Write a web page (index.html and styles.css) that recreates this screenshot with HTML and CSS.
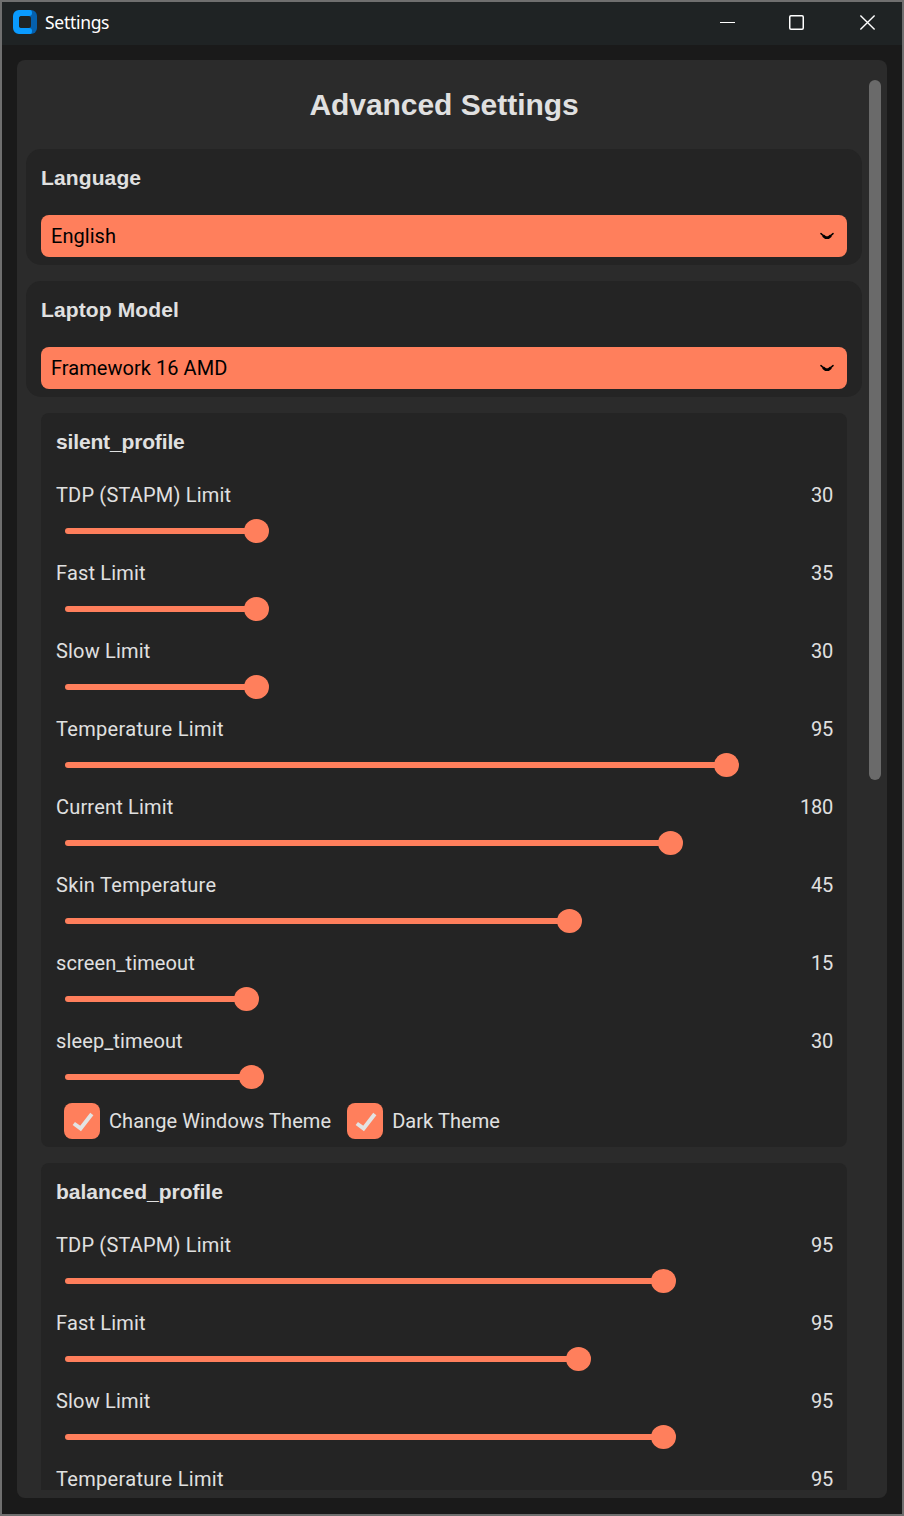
FILE: index.html
```html
<!DOCTYPE html>
<html lang="en">
<head>
<meta charset="utf-8">
<title>Settings</title>
<link rel="stylesheet" href="styles.css">
</head>
<body>
<div class="window">
  <header class="titlebar">
    <svg class="logo" width="24" height="24" viewBox="0 0 24 24"><path fill="#0560ad" d="M14 0h4a6 6 0 0 1 6 6v12a6 6 0 0 1-6 6h-4z"/><path fill="#0a9bff" d="M6 0h11a2 3 0 0 1 2 3a3 3 0 0 1-3 3H9a3 3 0 0 0-3 3v6a3 3 0 0 0 3 3h7a3 3 0 0 1 3 3a2 3 0 0 1-2 3H6a6 6 0 0 1-6-6V6a6 6 0 0 1 6-6z"/><rect x="6" y="6" width="12" height="12" rx="2.5" fill="#1f2324"/></svg>
    <span class="app-name">Settings</span>
    <div class="controls">
      <svg width="70" height="43" viewBox="0 0 70 43"><path d="M28 20.5h15" stroke="#fff" fill="none"/></svg>
      <svg width="70" height="43" viewBox="0 0 70 43"><rect x="27.75" y="13.75" width="13.5" height="13.5" rx="1.2" stroke="#fff" stroke-width="1.5" fill="none"/></svg>
      <svg width="70" height="43" viewBox="0 0 70 43"><path d="M28.4 13.4l14.2 14.2M42.6 13.4l-14.2 14.2" stroke="#fff" stroke-width="1.4" fill="none"/></svg>
    </div>
  </header>
  <main class="panel">
    <div class="content">
      <h1 class="title">Advanced Settings</h1>
      <section class="card">
        <h2 class="heading">Language</h2>
        <div class="select"><span>English</span><svg width="14" height="8" viewBox="0 0 14 8"><path d="M1 1.6l3 2.6M13 1.6l-3 2.6" stroke="#000" stroke-width="1.5" stroke-linecap="round"/><path d="M3 3.6L5.6 5.6h2.8L11 3.6" stroke="#000" stroke-width="2.6" fill="none"/></svg></div>
      </section>
      <section class="card">
        <h2 class="heading">Laptop Model</h2>
        <div class="select"><span>Framework 16 AMD</span><svg width="14" height="8" viewBox="0 0 14 8"><path d="M1 1.6l3 2.6M13 1.6l-3 2.6" stroke="#000" stroke-width="1.5" stroke-linecap="round"/><path d="M3 3.6L5.6 5.6h2.8L11 3.6" stroke="#000" stroke-width="2.6" fill="none"/></svg></div>
      </section>
      <section class="profile">
        <h2 class="heading tight">silent_profile</h2>
        <div class="row"><div class="label"><span>TDP (STAPM) Limit</span><span class="value">30</span></div><div class="slider" style="width:203.5px"></div></div>
        <div class="row"><div class="label"><span>Fast Limit</span><span class="value">35</span></div><div class="slider" style="width:203.5px"></div></div>
        <div class="row"><div class="label"><span>Slow Limit</span><span class="value">30</span></div><div class="slider" style="width:203.5px"></div></div>
        <div class="row"><div class="label"><span class="wide">Temperature Limit</span><span class="value">95</span></div><div class="slider" style="width:673.5px"></div></div>
        <div class="row"><div class="label"><span>Current Limit</span><span class="value">180</span></div><div class="slider" style="width:617.5px"></div></div>
        <div class="row"><div class="label"><span class="wide">Skin Temperature</span><span class="value">45</span></div><div class="slider" style="width:516.5px"></div></div>
        <div class="row"><div class="label"><span class="narrow">screen_timeout</span><span class="value">15</span></div><div class="slider" style="width:193.5px"></div></div>
        <div class="row"><div class="label"><span class="narrow">sleep_timeout</span><span class="value">30</span></div><div class="slider" style="width:198.5px"></div></div>
        <div class="checks">
          <div class="check"><svg width="36" height="36" viewBox="0 0 36 36"><rect width="36" height="36" rx="8" fill="#ff7f5c"/><path d="M9.8 20.5l6.8 4.9L27.8 11" stroke="#e3e3e3" stroke-width="4" fill="none"/></svg><span>Change Windows Theme</span></div>
          <div class="check"><svg width="36" height="36" viewBox="0 0 36 36"><rect width="36" height="36" rx="8" fill="#ff7f5c"/><path d="M9.8 20.5l6.8 4.9L27.8 11" stroke="#e3e3e3" stroke-width="4" fill="none"/></svg><span>Dark Theme</span></div>
        </div>
      </section>
      <section class="profile">
        <h2 class="heading">balanced_profile</h2>
        <div class="row"><div class="label"><span>TDP (STAPM) Limit</span><span class="value">95</span></div><div class="slider" style="width:610.5px"></div></div>
        <div class="row"><div class="label"><span>Fast Limit</span><span class="value">95</span></div><div class="slider" style="width:525.5px"></div></div>
        <div class="row"><div class="label"><span>Slow Limit</span><span class="value">95</span></div><div class="slider" style="width:610.5px"></div></div>
        <div class="row"><div class="label"><span class="wide">Temperature Limit</span><span class="value">95</span></div><div class="slider" style="width:673.5px"></div></div>
      </section>
    </div>
    <div class="scrollbar"></div>
  </main>
</div>
</body>
</html>
```
FILE: styles.css
```css
* { box-sizing: border-box; }
body { margin: 0; background: #1a1a1a; overflow: hidden; }
.window { height: 1516px; border: 2px solid #6f6f6f; background: #1a1a1a; color: #e0e0e0; font: 20px/24px Roboto, sans-serif; }
.titlebar { display: flex; align-items: center; height: 43px; padding-left: 11px; background: #1f2324; }
.logo { margin-top: -3px; }
.app-name { margin: -3px 0 0 8px; font: 17.5px/24px "Noto Sans", sans-serif; letter-spacing: -0.3px; color: #fff; }
.controls { display: flex; margin-left: auto; }
.panel { display: flex; justify-content: space-between; margin: 15px 15px 0; height: 1438px; padding: 0 6px 8px 9px; border-radius: 8px; background: #2b2b2b; }
.content { width: 836px; overflow: hidden; }
.title { margin: 0; height: 89px; text-align: center; font: bold 30px/89px "Liberation Sans", Arial, sans-serif; letter-spacing: -0.05px; }
.card { height: 116px; margin-bottom: 16px; padding: 0 15px; border-radius: 15px; background: #242424; }
.heading { margin: 0; height: 58px; font: bold 21px/58px "Liberation Sans", Arial, sans-serif; }
.card .heading { height: 66px; letter-spacing: 0.12px; }
.heading.tight { letter-spacing: -0.15px; }
.select { display: flex; align-items: center; justify-content: space-between; height: 42px; padding: 0 13px 0 10px; border-radius: 8px; background: #ff7f5c; color: #000; letter-spacing: 0.05px; }
.profile { margin: 0 15px 16px; padding: 0 14px 8px 15px; border-radius: 8px; background: #242424; }
.row { height: 78px; }
.label { display: flex; justify-content: space-between; line-height: 48px; letter-spacing: 0.18px; }
.label .wide { letter-spacing: 0.31px; }
.label .narrow { letter-spacing: 0.12px; }
.label .value { letter-spacing: -0.2px; }
.slider { display: flex; align-items: center; height: 24px; margin-left: 9px; }
.slider::before { content: ""; flex: 1; height: 6px; margin-right: -2px; border-radius: 3px 0 0 3px; background: #ff7f5c; }
.slider::after { content: ""; width: 25px; height: 24px; border-radius: 50%; background: #ff7f5c; }
.checks { display: flex; gap: 16px; padding: 8px 0 0 8px; }
.check { display: flex; align-items: center; gap: 9px; letter-spacing: 0.07px; }
.scrollbar { width: 12px; height: 700px; margin-top: 20px; border-radius: 6px; background: #6a6a6a; }
```
